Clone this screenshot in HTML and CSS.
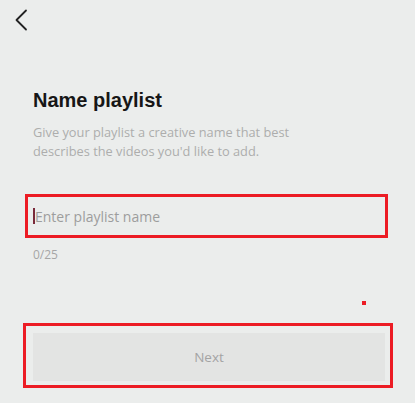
FILE: index.html
```html
<!DOCTYPE html>
<html lang="en">
<head>
    <meta charset="UTF-8">
    <meta name="viewport" content="width=device-width, initial-scale=1.0">
    <title>Name playlist</title>
    <link rel="stylesheet" href="styles.css">
</head>
<body>
    <div class="screen">
        <div class="top-bar">
            <button class="back-btn" title="Back">
                <svg width="14" height="22" viewBox="0 0 14 22">
                    <path d="M12 1.5 L2.5 11 L12 20.5" fill="none" stroke="#222" stroke-width="1.8" stroke-linecap="round" stroke-linejoin="round"/>
                </svg>
            </button>
        </div>

        <div class="intro">
            <h1>Name playlist</h1>
            <p>Give your playlist a creative name that best describes the videos you'd like to add.</p>
        </div>

        <div class="name-box">
            <span class="caret"></span>
            <input type="text" placeholder="Enter playlist name" maxlength="25">
        </div>
        <div class="counter">0/25</div>

        <div class="mark"></div>

        <div class="next-box">
            <button class="next-btn" disabled>Next</button>
        </div>
    </div>
</body>
</html>
```

FILE: styles.css
```css
body {
    margin: 0;
    background-color: #ebedec;
    font-family: "Open Sans", Lato, sans-serif;
}
.screen {
    width: 415px;
    height: 403px;
    overflow: hidden;
}
.top-bar {
    height: 40px;
    padding: 9px 0 0 14px;
    box-sizing: border-box;
}
.back-btn {
    background: transparent;
    border: none;
    padding: 0;
    cursor: pointer;
}
.intro {
    padding: 49px 0 0 33px;
}
.intro h1 {
    margin: 0;
    font-family: "Liberation Sans", Arial, sans-serif;
    font-size: 20px;
    line-height: 22px;
    font-weight: 700;
    color: #161616;
}
.intro p {
    margin: 12px 0 0;
    width: 300px;
    font-size: 12.8px;
    line-height: 19px;
    color: #adadad;
}
.name-box {
    margin: 33px 0 0 25px;
    width: 352px;
    height: 38px;
    border: 3px solid #ec1c24;
    display: flex;
    align-items: center;
    padding-left: 5px;
}
.caret {
    width: 2px;
    height: 16px;
    background-color: #7a2a3a;
}
.name-box input {
    flex: 1;
    border: none;
    background: transparent;
    outline: none;
    padding: 0;
    font-family: inherit;
    font-size: 14px;
    color: #222;
}
.name-box input::placeholder {
    color: #9d9d9d;
}
.counter {
    margin: 8px 0 0 33px;
    font-size: 12px;
    color: #a6a6a6;
}
.mark {
    margin: 38px 0 0 362px;
    width: 4px;
    height: 4px;
    background-color: #ec1c24;
}
.next-box {
    margin: 18px 0 0 23px;
    border: 3px solid #ec1c24;
    padding: 7px 5px 4px 7px;
    width: 352px;
    height: 48px;
}
.next-btn {
    width: 100%;
    height: 100%;
    border: none;
    background-color: #e3e4e3;
    font-family: inherit;
    font-size: 13.5px;
    color: #a3a3a3;
}
```
